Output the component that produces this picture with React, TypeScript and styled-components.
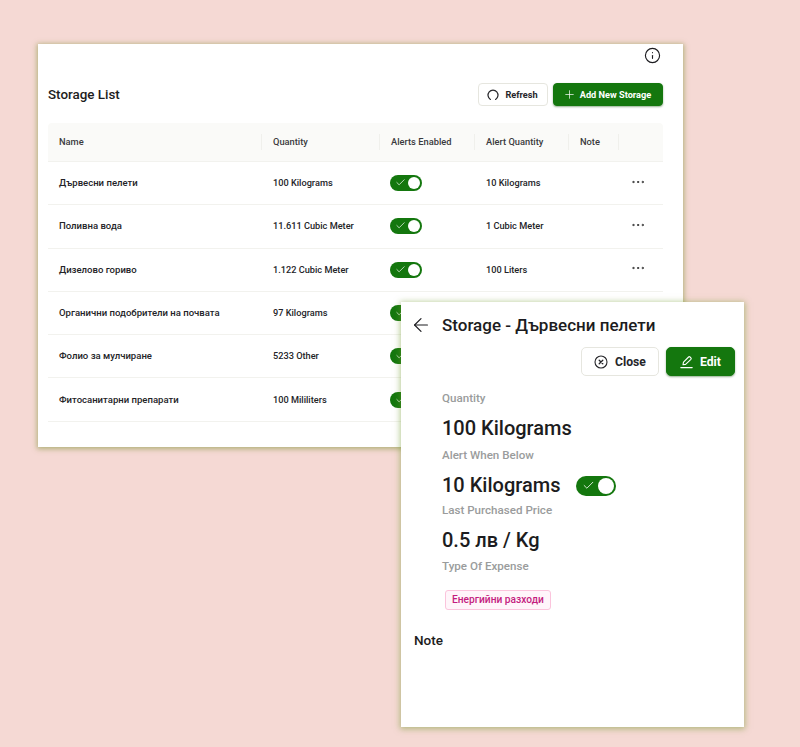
import styled, { createGlobalStyle } from 'styled-components';
import { ArrowLeft, Check, Info, MoreHorizontal, Plus } from 'lucide-react';

const GlobalStyle = createGlobalStyle`
  html, body {
    margin: 0;
    padding: 0;
    background: #f5d9d4;
  }
  * {
    box-sizing: border-box;
  }
`;

const Page = styled.div`
  position: relative;
  width: 800px;
  height: 747px;
  padding: 44px 0 0 38px;
  background: #f5d9d4;
  color: #1c1c20;
  font-family: Roboto, 'Noto Sans', sans-serif;
  overflow: hidden;
`;

const ListCard = styled.section`
  position: relative;
  width: 645px;
  height: 403px;
  padding: 39px 20px 0 10px;
  background: #fff;
  box-shadow: 0 1px 5px 1px rgba(110, 135, 30, 0.5);
`;

const InfoButton = styled.span`
  position: absolute;
  top: 3px;
  right: 22px;
  display: flex;
  color: #1c1c20;
`;

const Toolbar = styled.div`
  display: flex;
  align-items: center;
  justify-content: space-between;
  height: 23px;
  margin-bottom: 17px;
`;

const Title = styled.h2`
  margin: 0;
  font-size: 13.4px;
  font-weight: 500;
`;

const Actions = styled.div<{ $gap: number }>`
  display: flex;
  gap: ${(p) => p.$gap}px;
  justify-content: flex-end;
`;

const Button = styled.button<{ $primary?: boolean; $large?: boolean }>`
  display: flex;
  align-items: center;
  justify-content: center;
  gap: ${(p) => (p.$large ? 7 : 6)}px;
  height: ${(p) => (p.$large ? 29 : 23)}px;
  padding: 0;
  border: 1px solid ${(p) => (p.$primary ? '#14770e' : '#e6e6df')};
  border-radius: ${(p) => (p.$large ? 5 : 4)}px;
  background: ${(p) => (p.$primary ? '#14770e' : '#fff')};
  color: ${(p) => (p.$primary ? '#fff' : '#26262a')};
  box-shadow: ${(p) => (p.$primary ? '0 1px 2px rgba(20, 80, 10, 0.45)' : 'none')};
  font-family: inherit;
  font-size: ${(p) => (p.$large ? 12.2 : 9.2)}px;
  font-weight: 700;
  white-space: nowrap;
`;

const RefreshButton = styled(Button)`
  width: 70px;
  padding-right: 1px;
`;

const AddButton = styled(Button)`
  width: 110px;
  gap: 4px;
  padding-right: 2px;
`;

const CloseButton = styled(Button)`
  width: 78px;
`;

const EditButton = styled(Button)`
  width: 69px;
`;

const Row = styled.div<{ $head?: boolean }>`
  display: grid;
  grid-template-columns: 214px 118px 95px 94px 50px 44px;
  align-items: center;
  height: ${(p) => (p.$head ? 39 : 43.3)}px;
  border-bottom: 1px solid #f2f2ee;
  border-radius: ${(p) => (p.$head ? '4px 4px 0 0' : 0)};
  background: ${(p) => (p.$head ? '#fafaf8' : 'transparent')};
  font-size: ${(p) => (p.$head ? 9.3 : 9.2)}px;
  font-weight: 500;
  color: ${(p) => (p.$head ? '#3a3a3e' : '#232327')};
`;

const HeadCell = styled.div<{ $last?: boolean }>`
  height: 16px;
  padding-left: 11px;
  line-height: 16px;
  border-right: ${(p) => (p.$last ? 'none' : '1px solid #f0f0ec')};
  white-space: nowrap;
`;

const Cell = styled.div`
  margin-top: -1px;
  padding-left: 11px;
  white-space: nowrap;
`;

const NameCell = styled(Cell)`
  font-size: 9.55px;
`;

const ToggleCell = styled.div`
  padding-left: 10px;
`;

const MenuCell = styled.div`
  display: flex;
  justify-content: center;
  margin: -3px 7px 0 0;
  color: #222;
`;

const Toggle = styled.span<{ $large?: boolean }>`
  position: relative;
  display: block;
  flex: none;
  width: ${(p) => (p.$large ? 40 : 32)}px;
  height: ${(p) => (p.$large ? 20 : 16)}px;
  margin-top: ${(p) => (p.$large ? 2 : 0)}px;
  border-radius: 10px;
  background: #14770e;
  color: #fff;

  svg {
    position: absolute;
    top: ${(p) => (p.$large ? 3 : 2)}px;
    left: ${(p) => (p.$large ? 6 : 5)}px;
  }

  &::after {
    content: '';
    position: absolute;
    top: 2px;
    right: 2px;
    width: ${(p) => (p.$large ? 16 : 12)}px;
    height: ${(p) => (p.$large ? 16 : 12)}px;
    border-radius: 50%;
    background: #fff;
  }
`;

const DetailCard = styled.aside`
  position: absolute;
  top: 302px;
  left: 401px;
  width: 343px;
  height: 425px;
  padding: 12px 9px 0 13px;
  background: #fff;
  box-shadow: 0 1px 6px 1px rgba(110, 150, 40, 0.5);
`;

const DetailHeader = styled.div`
  display: flex;
  align-items: center;
  gap: 10px;
  height: 22px;
  margin: 0 0 11px -4px;
`;

const DetailTitle = styled.h3`
  margin: 0;
  font-size: 17px;
  font-weight: 500;
  white-space: nowrap;
`;

const Fields = styled.dl`
  margin: 14px 0 0;
  padding-left: 28px;
`;

const FieldLabel = styled.dt`
  height: 16px;
  margin-bottom: 7px;
  color: #9a9c9c;
  font-size: 11.6px;
  font-weight: 500;
  line-height: 16px;
`;

const FieldValue = styled.dd<{ $after: number }>`
  display: flex;
  align-items: center;
  gap: 16px;
  height: 28px;
  margin: 0 0 ${(p) => p.$after}px;
  padding-top: 2px;
  font-size: 20px;
  font-weight: 500;
`;

const TagValue = styled.dd`
  margin: 14px 0 0 3px;
`;

const Tag = styled.span`
  display: inline-block;
  height: 20px;
  padding: 0 6px;
  border: 1px solid #fbc4dc;
  border-radius: 3px;
  background: #fff5fa;
  color: #c41d7f;
  font-size: 10.2px;
  font-weight: 500;
  line-height: 18px;
`;

const NoteHeading = styled.h4`
  margin: 22px 0 0;
  font-size: 13.5px;
  font-weight: 500;
`;

// open ring, gap at the bottom
const RefreshIcon = () => (
  <svg width="12" height="12" viewBox="0 0 12 12" fill="none" stroke="currentColor" strokeWidth="1.2" strokeLinecap="round">
    <path d="M3.4 10.4A5 5 0 1 1 8.6 10.4" />
  </svg>
);

const CloseIcon = () => (
  <svg width="14" height="14" viewBox="0 0 14 14" fill="none" stroke="currentColor" strokeWidth="1.1" strokeLinecap="round">
    <circle cx="7" cy="7" r="6" />
    <path d="M5.2 5.2l3.6 3.6M8.8 5.2L5.2 8.8" strokeWidth="1.3" />
  </svg>
);

const EditIcon = () => (
  <svg width="13" height="14" viewBox="0 0 13 14" fill="none" stroke="currentColor" strokeWidth="1.1" strokeLinejoin="round" strokeLinecap="round">
    <path d="M3 9.6l.5-2.4L8.6 2a1 1 0 0 1 1.4 0l.9.9a1 1 0 0 1 0 1.4L5.6 9.4 3 9.6z" />
    <path d="M.8 12.6h11.4" />
  </svg>
);

const storages = [
  { name: 'Дървесни пелети', quantity: '100 Kilograms', alert: '10 Kilograms', menu: true },
  { name: 'Поливна вода', quantity: '11.611 Cubic Meter', alert: '1 Cubic Meter', menu: true },
  { name: 'Дизелово гориво', quantity: '1.122 Cubic Meter', alert: '100 Liters', menu: true },
  { name: 'Органични подобрители на почвата', quantity: '97 Kilograms', alert: '', menu: false },
  { name: 'Фолио за мулчиране', quantity: '5233 Other', alert: '', menu: false },
  { name: 'Фитосанитарни препарати', quantity: '100 Mililiters', alert: '', menu: false },
];

export default function App() {
  return (
    <Page>
      <GlobalStyle />
      <ListCard>
        <InfoButton>
          <Info size={17} strokeWidth={1.6} />
        </InfoButton>
        <Toolbar>
          <Title>Storage List</Title>
          <Actions $gap={5}>
            <RefreshButton>
              <RefreshIcon />
              Refresh
            </RefreshButton>
            <AddButton $primary>
              <Plus size={13} strokeWidth={1.3} />
              Add New Storage
            </AddButton>
          </Actions>
        </Toolbar>
        <Row $head>
          <HeadCell>Name</HeadCell>
          <HeadCell>Quantity</HeadCell>
          <HeadCell>Alerts Enabled</HeadCell>
          <HeadCell>Alert Quantity</HeadCell>
          <HeadCell>Note</HeadCell>
          <HeadCell $last />
        </Row>
        {storages.map((item) => (
          <Row key={item.name}>
            <NameCell>{item.name}</NameCell>
            <Cell>{item.quantity}</Cell>
            <ToggleCell>
              <Toggle>
                <Check size={11} strokeWidth={1.5} />
              </Toggle>
            </ToggleCell>
            <Cell>{item.alert}</Cell>
            <Cell />
            <MenuCell>{item.menu && <MoreHorizontal size={16} strokeWidth={1.3} />}</MenuCell>
          </Row>
        ))}
      </ListCard>

      <DetailCard>
        <DetailHeader>
          <ArrowLeft size={22} strokeWidth={1.3} />
          <DetailTitle>Storage - Дървесни пелети</DetailTitle>
        </DetailHeader>
        <Actions $gap={7}>
          <CloseButton $large>
            <CloseIcon />
            Close
          </CloseButton>
          <EditButton $large $primary>
            <EditIcon />
            Edit
          </EditButton>
        </Actions>
        <Fields>
          <FieldLabel>Quantity</FieldLabel>
          <FieldValue $after={6}>100 Kilograms</FieldValue>
          <FieldLabel>Alert When Below</FieldLabel>
          <FieldValue $after={4}>
            10 Kilograms
            <Toggle $large>
              <Check size={13} strokeWidth={1.5} />
            </Toggle>
          </FieldValue>
          <FieldLabel>Last Purchased Price</FieldLabel>
          <FieldValue $after={5}>0.5 лв / Kg</FieldValue>
          <FieldLabel>Type Of Expense</FieldLabel>
          <TagValue>
            <Tag>Енергийни разходи</Tag>
          </TagValue>
        </Fields>
        <NoteHeading>Note</NoteHeading>
      </DetailCard>
    </Page>
  );
}
